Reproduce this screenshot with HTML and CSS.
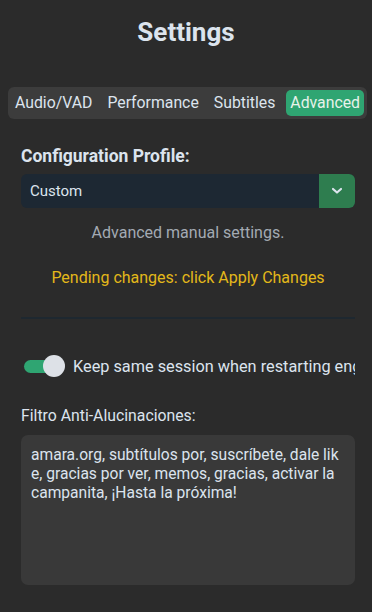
FILE: index.html
```html
<!DOCTYPE html>
<html>
<head>
<meta charset="utf-8">
<link rel="stylesheet" href="styles.css">
</head>
<body>
<div class="page">
  <h1 class="title">Settings</h1>
  <div class="tabs">
    <div class="tab">Audio/VAD</div>
    <div class="tab">Performance</div>
    <div class="tab">Subtitles</div>
    <div class="tab active">Advanced</div>
  </div>
  <div class="content">
    <div class="section-label">Configuration Profile:</div>
    <div class="select">
      <div class="select-value">Custom</div>
      <div class="select-btn">
        <svg width="12" height="8" viewBox="0 0 12 8"><path d="M2 2 L6 5.5 L10 2" fill="none" stroke="#dce4ee" stroke-width="2.2" stroke-linecap="round" stroke-linejoin="round"/></svg>
      </div>
    </div>
    <div class="hint">Advanced manual settings.</div>
    <div class="pending">Pending changes: click Apply Changes</div>
    <div class="divider"></div>
    <div class="switch-row">
      <div class="switch"><div class="knob"></div></div>
      <div class="switch-label">Keep same session when restarting engine</div>
    </div>
    <div class="field-label">Filtro Anti-Alucinaciones:</div>
    <div class="textarea">amara.org, subtítulos por, suscríbete, dale lik<wbr>e, gracias por ver, memos, gracias, activar la <wbr>campanita, ¡Hasta la próxima!</div>
  </div>
</div>
</body>
</html>
```
FILE: styles.css
```css
html, body {
  margin: 0;
  padding: 0;
  background: #2b2b2b;
}
body {
  width: 372px;
  height: 612px;
  overflow: hidden;
  font-family: Roboto, "Liberation Sans", sans-serif;
  color: #dce4ee;
}
.page {
  display: flex;
  flex-direction: column;
}
.title {
  margin: 0;
  height: 64px;
  line-height: 64px;
  text-align: center;
  font-size: 26px;
  font-weight: 700;
  color: #dce4ee;
}
.tabs {
  margin: 23px 5px 0 8px;
  height: 32px;
  background: #3c3c3c;
  border-radius: 6px;
  display: flex;
  align-items: center;
  justify-content: space-between;
  padding: 0 3px;
  box-sizing: border-box;
}
.tab {
  font-size: 15.8px;
  color: #dce4ee;
  height: 26px;
  line-height: 26px;
  padding: 0 4px;
  border-radius: 5px;
  white-space: nowrap;
}
.tab.active {
  background: #2fa572;
  color: #e8f2ea;
}
.content {
  padding: 0 17px 0 21px;
  display: flex;
  flex-direction: column;
}
.section-label {
  margin-top: 27px;
  font-size: 17.5px;
  font-weight: 700;
  line-height: 20px;
}
.select {
  margin-top: 8px;
  height: 34px;
  display: flex;
  border-radius: 6px;
  overflow: hidden;
  background: #1d2833;
}
.select-value {
  flex: 1;
  font-size: 15px;
  line-height: 34px;
  padding-left: 9px;
}
.select-btn {
  width: 36px;
  background: #2e7d4f;
  display: flex;
  align-items: center;
  justify-content: center;
}
.hint {
  margin-top: 15px;
  text-align: center;
  font-size: 16px;
  line-height: 19px;
  color: #a3aab3;
}
.pending {
  margin-top: 26px;
  text-align: center;
  font-size: 16px;
  line-height: 19px;
  color: #e3b81a;
}
.divider {
  margin-top: 30px;
  height: 2px;
  background: #1e2830;
}
.switch-row {
  margin-top: 36px;
  display: flex;
  align-items: center;
  height: 22px;
  overflow: hidden;
  white-space: nowrap;
}
.switch {
  position: relative;
  width: 40px;
  height: 22px;
  flex: none;
  margin-left: 3px;
}
.switch::before {
  content: "";
  position: absolute;
  left: 0;
  top: 5px;
  width: 34px;
  height: 13px;
  border-radius: 7px;
  background: #2fa572;
}
.knob {
  position: absolute;
  left: 19px;
  top: 0;
  width: 22px;
  height: 22px;
  border-radius: 50%;
  background: #dde1e7;
}
.switch-label {
  margin-left: 9px;
  font-size: 16.3px;
  overflow: hidden;
}
.field-label {
  margin-top: 29px;
  font-size: 15.8px;
  line-height: 19px;
}
.textarea {
  margin-top: 10px;
  height: 150px;
  box-sizing: border-box;
  background: #393939;
  border-radius: 7px;
  padding: 11px 8px 0 10px;
  font-size: 15.6px;
  line-height: 19px;
  overflow-wrap: anywhere;
}
```
